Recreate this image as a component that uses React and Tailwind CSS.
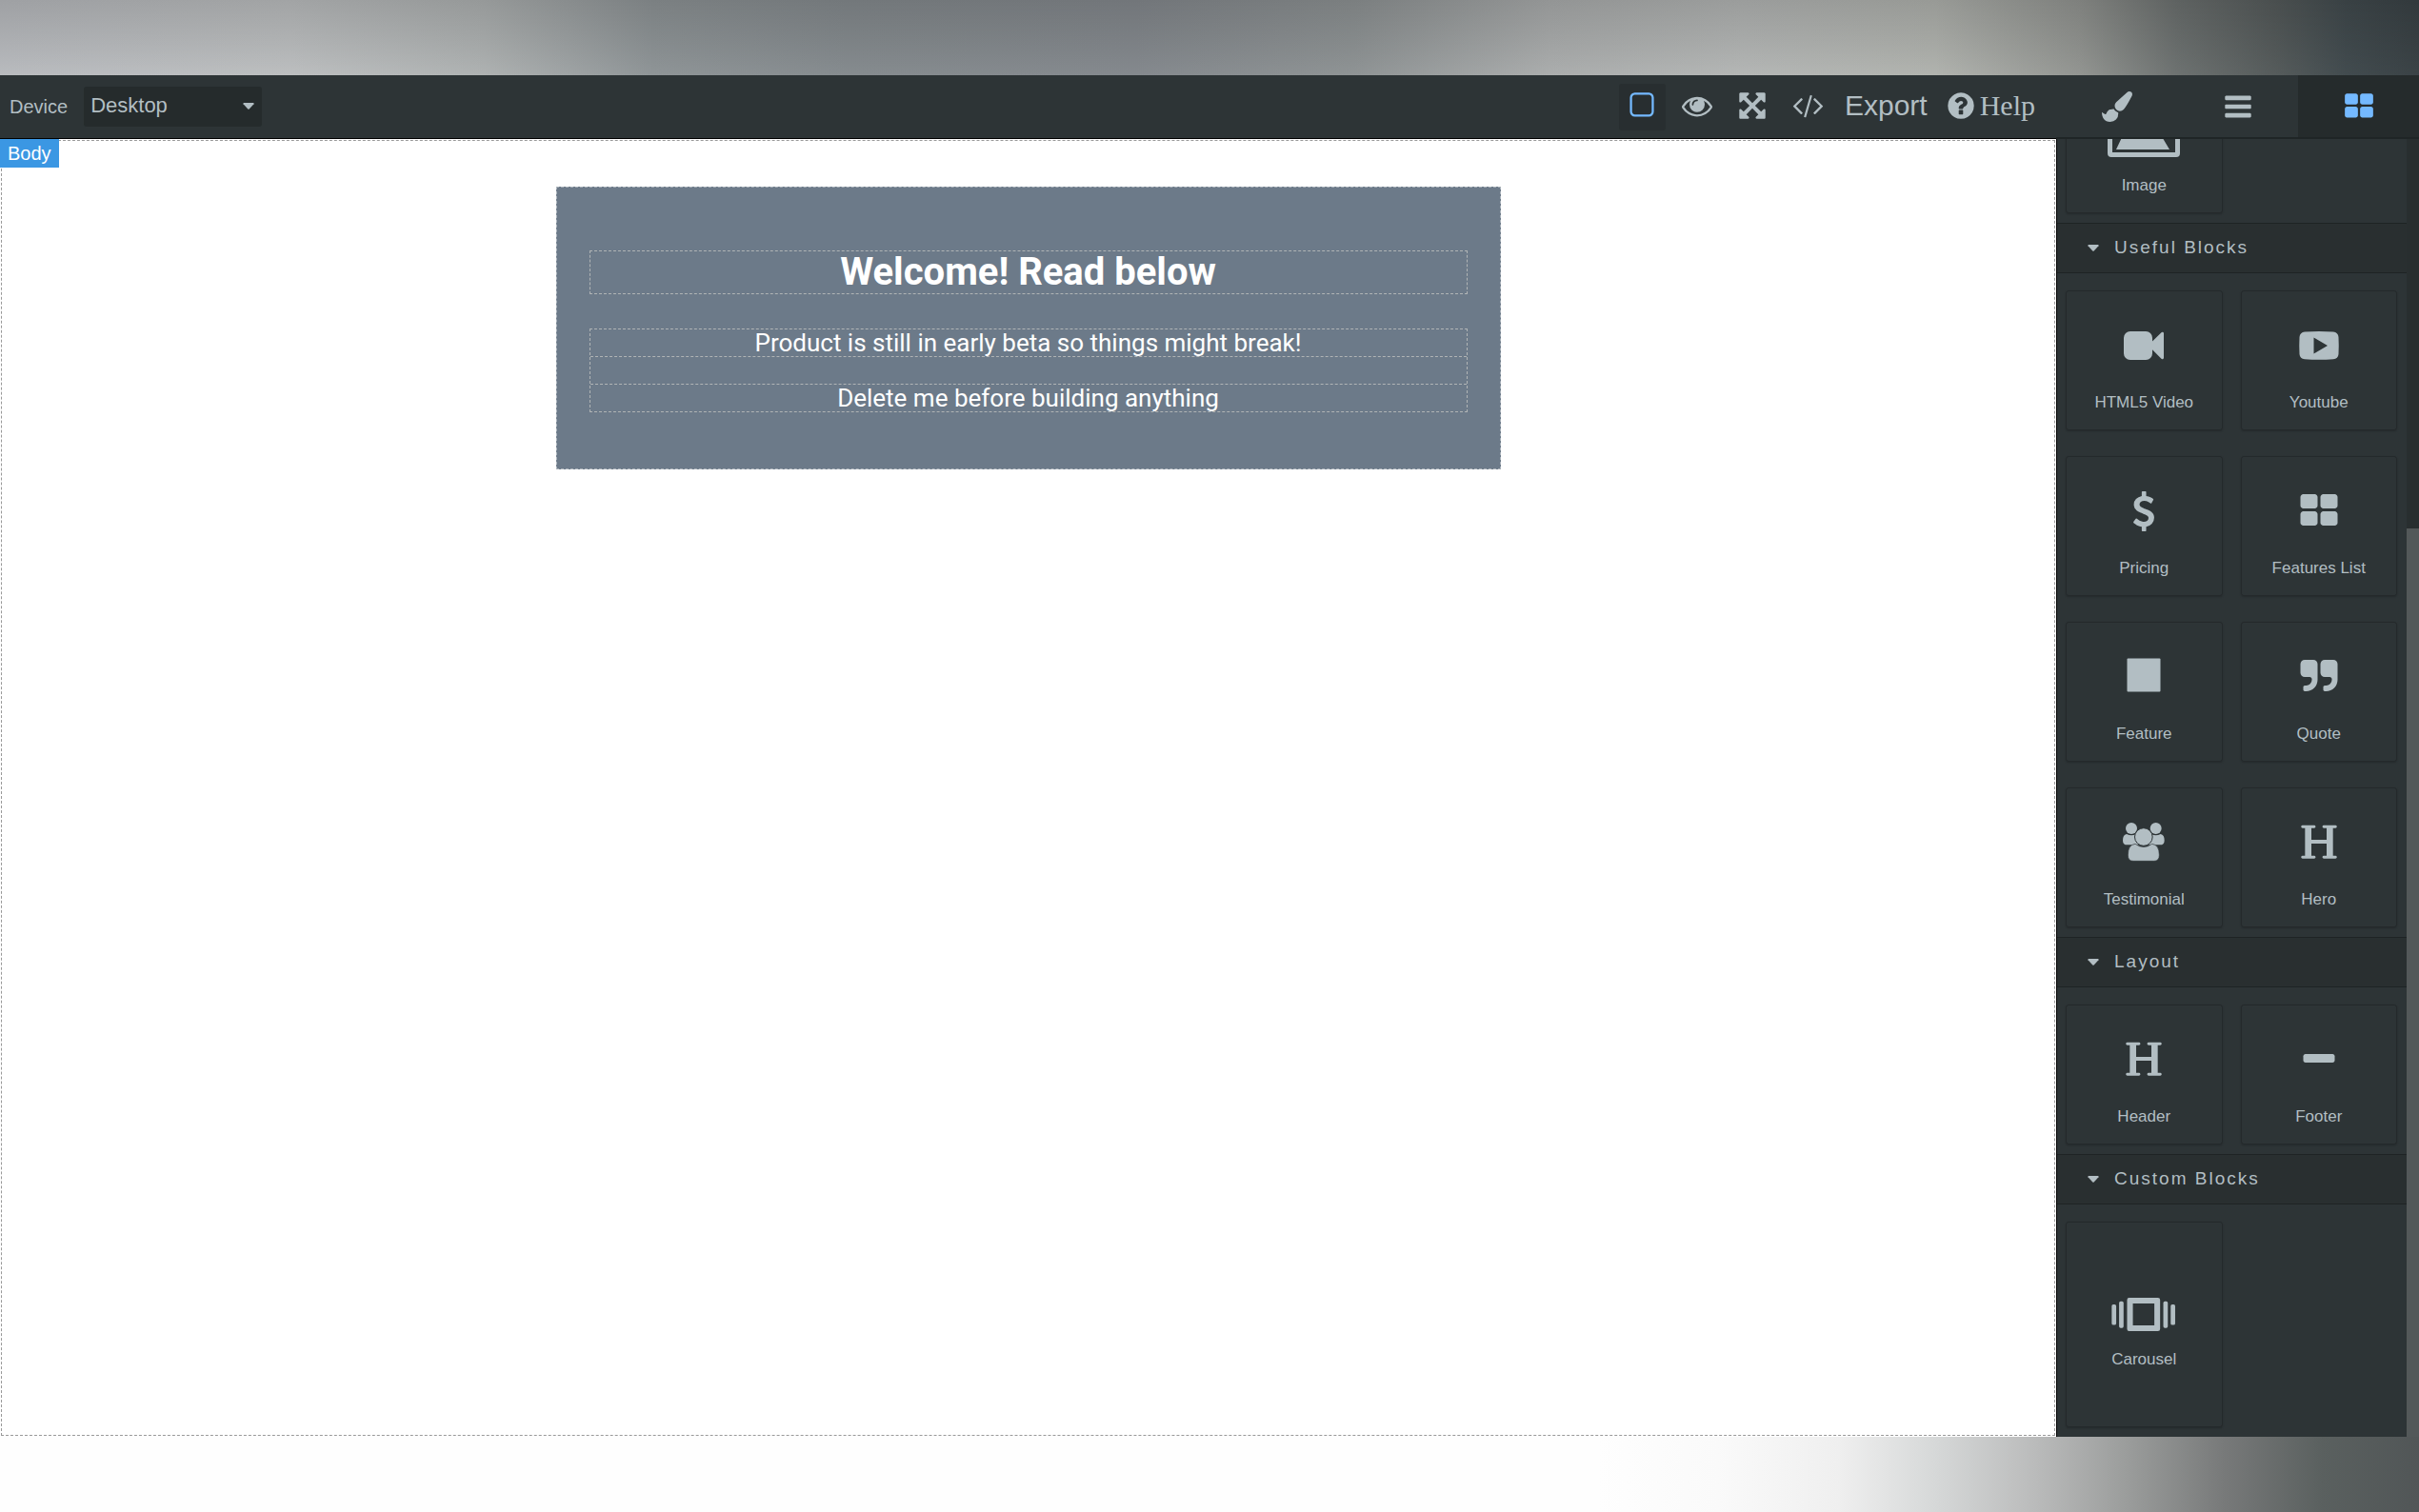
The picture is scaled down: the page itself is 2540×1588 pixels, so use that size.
import React, { useState } from 'react';

const iconPaths = {
  outline: 'M1312 256h-832q-66 0-113 47t-47 113v832q0 66 47 113t113 47h832q66 0 113-47t47-113v-832q0-66-47-113t-113-47zm288 160v832q0 119-84.5 203.5t-203.5 84.5h-832q-119 0-203.5-84.5t-84.5-203.5v-832q0-119 84.5-203.5t203.5-84.5h832q119 0 203.5 84.5t84.5 203.5z',
  eye: 'M1664 960q-152-236-381-353 61 104 61 225 0 185-131.5 316.5t-316.5 131.5-316.5-131.5-131.5-316.5q0-121 61-225-229 117-381 353 133 205 333.5 326.5t434.5 121.5 434.5-121.5 333.5-326.5zm-720-384q0-20-14-34t-34-14q-125 0-214.5 89.5t-89.5 214.5q0 20 14 34t34 14 34-14 14-34q0-86 61-147t147-61q20 0 34-14t14-34zm848 384q0 34-20 69-140 230-376.5 368.5t-499.5 138.5-499.5-139-376.5-368q-20-35-20-69t20-69q140-229 376.5-368t499.5-139 499.5 139 376.5 368q20 35 20 69z',
  expand: 'M1411 541l-355 355 355 355 144-144q29-31 70-14 39 17 39 59v448q0 26-19 45t-45 19h-448q-42 0-59-40-17-39 14-69l144-144-355-355-355 355 144 144q31 30 14 69-17 40-59 40h-448q-26 0-45-19t-19-45v-448q0-42 40-59 39-17 69 14l144 144 355-355-355-355-144 144q-19 19-45 19-12 0-24-5-40-17-40-59v-448q0-26 19-45t45-19h448q42 0 59 40 17 39-14 69l-144 144 355 355 355-355-144-144q-31-30-14-69 17-40 59-40h448q26 0 45 19t19 45v448q0 42-39 59-13 5-25 5-26 0-45-19z',
  code: 'M681 1399l-50 50q-10 10-23 10t-23-10l-466-466q-10-10-10-23t10-23l466-466q10-10 23-10t23 10l50 50q10 10 10 23t-10 23l-393 393 393 393q10 10 10 23t-10 23zm591-1067l-373 1291q-4 13-15.5 19.5t-23.5 2.5l-62-17q-13-4-19.5-15.5t-2.5-24.5l373-1291q4-13 15.5-19.5t23.5-2.5l62 17q13 4 19.5 15.5t2.5 24.5zm657 651l-466 466q-10 10-23 10t-23-10l-50-50q-10-10-10-23t10-23l393-393-393-393q-10-10-10-23t10-23l50-50q10-10 23-10t23 10l466 466q10 10 10 23t-10 23z',
  help: 'M1024 1376v-192q0-14-9-23t-23-9h-192q-14 0-23 9t-9 23v192q0 14 9 23t23 9h192q14 0 23-9t9-23zm256-672q0-88-55.5-163t-138.5-116-170-41q-243 0-371 213-15 24 8 42l132 100q7 6 19 6 16 0 25-12 53-68 86-92 34-24 86-24 48 0 85.5 26t37.5 59q0 38-20 61t-68 45q-63 28-115.5 86.5t-52.5 125.5v36q0 14 9 23t23 9h192q14 0 23-9t9-23q0-19 21.5-49.5t54.5-49.5q32-18 49-28.5t46-35 44.5-48 28-60.5 12.5-81zm384 192q0 209-103 385.5t-279.5 279.5-385.5 103-385.5-103-279.5-279.5-103-385.5 103-385.5 279.5-279.5 385.5-103 385.5 103 279.5 279.5 103 385.5z',
  brush: 'M1615 0q70 0 122.5 46.5t52.5 116.5q0 63-45 151-332 629-465 752-97 91-218 91-126 0-216.5-92.5t-90.5-219.5q0-128 92-212l638-579q59-54 130-54zm-909 1034q39 76 106.5 130t150.5 76l1 71q4 213-129.5 347t-348.5 134q-123 0-218-46.5t-152.5-127.5-86.5-183-29-220q7 5 41 30t62 44.5 59 36.5 46 17q41 0 55-37 25-66 57.5-112.5t69.5-76 88-47.5 103-25.5 125-10.5z',
  bars: 'M1664 1344v128q0 26-19 45t-45 19h-1408q-26 0-45-19t-19-45v-128q0-26 19-45t45-19h1408q26 0 45 19t19 45zm0-512v128q0 26-19 45t-45 19h-1408q-26 0-45-19t-19-45v-128q0-26 19-45t45-19h1408q26 0 45 19t19 45zm0-512v128q0 26-19 45t-45 19h-1408q-26 0-45-19t-19-45v-128q0-26 19-45t45-19h1408q26 0 45 19t19 45z',
  grid: 'M832 1024v384q0 52-38 90t-90 38h-512q-52 0-90-38t-38-90v-384q0-52 38-90t90-38h512q52 0 90 38t38 90zm0-768v384q0 52-38 90t-90 38h-512q-52 0-90-38t-38-90v-384q0-52 38-90t90-38h512q52 0 90 38t38 90zm896 768v384q0 52-38 90t-90 38h-512q-52 0-90-38t-38-90v-384q0-52 38-90t90-38h512q52 0 90 38t38 90zm0-768v384q0 52-38 90t-90 38h-512q-52 0-90-38t-38-90v-384q0-52 38-90t90-38h512q52 0 90 38t38 90z',
  video: 'M1792 352v1088q0 42-39 59-13 5-25 5-27 0-45-19l-403-403v166q0 119-84.5 203.5t-203.5 84.5h-704q-119 0-203.5-84.5t-84.5-203.5v-704q0-119 84.5-203.5t203.5-84.5h704q119 0 203.5 84.5t84.5 203.5v165l403-402q18-19 45-19 12 0 25 5 39 17 39 59z',
  dollar: 'M1362 1185q0 153-99.5 263.5t-258.5 136.5v175q0 14-9 23t-23 9h-135q-13 0-22.5-9.5t-9.5-22.5v-175q-66-9-127.5-31t-101.5-44.5-74-48-46.5-37.5-17.5-18q-17-21-2-41l103-135q7-10 23-12 15-2 24 9l2 2q113 99 243 125 37 8 74 8 81 0 142.5-43t61.5-122q0-28-15-53t-33.5-42-58.5-37.5-66-32-80-32.5q-39-16-61.5-25t-61.5-26.5-62.5-31-56.5-35.5-53.5-42.5-43.5-49-35.5-58-21-66.5-8.5-78q0-138 98-242t255-134v-180q0-13 9.5-22.5t22.5-9.5h135q14 0 23 9t9 23v176q57 6 110.5 23t87 33.5 63.5 37.5 39 29 15 14q17 18 5 38l-81 146q-8 15-23 16-14 3-27-7-3-3-14.5-12t-39-26.5-58.5-32-74.5-26-85.5-11.5q-95 0-155 43t-60 111q0 26 8.5 48t29.5 41.5 39.5 33 56 31 60.5 27 70 27.5q53 20 81 31.5t76 35 75.5 42.5 62 50 53 63.5 31.5 76.5 13 94z',
  quote: 'M832 320v704q0 104-40.5 198.5t-109.5 163.5-163.5 109.5-198.5 40.5h-64q-26 0-45-19t-19-45v-128q0-26 19-45t45-19h64q106 0 181-75t75-181v-32q0-40-28-68t-68-28h-224q-80 0-136-56t-56-136v-384q0-80 56-136t136-56h384q80 0 136 56t56 136zm896 0v704q0 104-40.5 198.5t-109.5 163.5-163.5 109.5-198.5 40.5h-64q-26 0-45-19t-19-45v-128q0-26 19-45t45-19h64q106 0 181-75t75-181v-32q0-40-28-68t-68-28h-224q-80 0-136-56t-56-136v-384q0-80 56-136t136-56h384q80 0 136 56t56 136z',
  minus: 'M1600 736v192q0 40-28 68t-68 28h-1216q-40 0-68-28t-28-68v-192q0-40 28-68t68-28h1216q40 0 68 28t28 68z'
};

const Icon = ({ name, className, viewBox = '0 0 1792 1792' }) => (
  <svg viewBox={viewBox} fill="currentColor" className={className} aria-hidden="true">
    <path d={iconPaths[name]} />
  </svg>
);

const YoutubeIcon = () => (
  <svg viewBox="0 0 42 42" className="h-[42px] w-[42px]" fill="currentColor" aria-hidden="true">
    <path fillRule="evenodd" d="M6 6.500Q21 5.600 36 6.500Q41 7 41.500 12Q42 21 41.500 30Q41 35 36 35.300Q21 36.400 6 35.300Q1 35 .5 30Q0 21 .5 12Q1 7 6 6.500ZM15.500 12.500V29.500L30 21Z" />
  </svg>
);

const SquareIcon = () => (
  <svg viewBox="0 0 42 42" className="h-[42px] w-[42px]" fill="currentColor" aria-hidden="true">
    <rect x="3.500" y="1.500" width="35" height="35" rx="1" />
  </svg>
);

const HeadingIcon = () => (
  <svg viewBox="0 0 126 126" className="h-[42px] w-[42px]" fill="currentColor" aria-hidden="true">
    <rect x="7" y="8" width="45" height="9" rx="4" />
    <rect x="74" y="8" width="45" height="9" rx="4" />
    <rect x="7" y="104" width="45" height="9" rx="4" />
    <rect x="74" y="104" width="45" height="9" rx="4" />
    <rect x="19" y="10" width="20" height="101" />
    <rect x="87" y="10" width="20" height="101" />
    <rect x="36" y="54" width="54" height="12" />
  </svg>
);

const UsersIcon = () => (
  <svg viewBox="0 0 132 126" className="h-[42px] w-[44px]" fill="currentColor" aria-hidden="true">
    <circle cx="27" cy="18" r="18" />
    <circle cx="104" cy="18" r="18" />
    <path d="M12 36Q27 44 42 36L52 70H14Q0 70 0 56Q0 38 12 36Z" />
    <path d="M119 36Q104 44 89 36L79 70H117Q131 70 131 56Q131 38 119 36Z" />
    <path d="M39 67Q66 86 92 67Q115 70 115 102Q115 121 98 121H33Q16 121 16 102Q16 70 39 67Z" stroke="#2d3436" strokeWidth="2" />
    <circle cx="65.500" cy="45" r="28" stroke="#2d3436" strokeWidth="3" />
  </svg>
);

const CarouselIcon = () => (
  <svg viewBox="0 0 200 104" className="h-[35px] w-[68px]" fill="currentColor" aria-hidden="true">
    <rect x="0" y="21" width="14" height="64" rx="5" />
    <rect x="23" y="11" width="14" height="83" rx="5" />
    <path fillRule="evenodd" d="M54 0H144Q151 0 151 7V97Q151 104 144 104H54Q48 104 48 97V7Q48 0 54 0ZM66 18V86H133V18Z" />
    <rect x="161" y="11" width="14" height="83" rx="5" />
    <rect x="184" y="21" width="14" height="64" rx="5" />
  </svg>
);

const ImageIcon = () => (
  <svg viewBox="0 0 76 60" className="h-[60px] w-[76px]" fill="currentColor" aria-hidden="true">
    <path fillRule="evenodd" d="M4 0H72Q76 0 76 4V56Q76 60 72 60H4Q0 60 0 56V4Q0 0 4 0ZM5 5V55H71V5Z" />
    <path d="M9 52L27 14L38 32L46 20L65 52Z" />
  </svg>
);

const blockIcon = 'h-[42px] w-[42px]';

const sections = [
  {
    title: 'Useful Blocks',
    blocks: [
      { label: 'HTML5 Video', icon: <Icon name="video" className={blockIcon} /> },
      { label: 'Youtube', icon: <YoutubeIcon /> },
      { label: 'Pricing', icon: <Icon name="dollar" className={blockIcon} /> },
      { label: 'Features List', icon: <Icon name="grid" className={blockIcon} /> },
      { label: 'Feature', icon: <SquareIcon /> },
      { label: 'Quote', icon: <Icon name="quote" className={blockIcon} /> },
      { label: 'Testimonial', icon: <UsersIcon /> },
      { label: 'Hero', icon: <HeadingIcon /> }
    ]
  },
  {
    title: 'Layout',
    blocks: [
      { label: 'Header', icon: <HeadingIcon /> },
      { label: 'Footer', icon: <Icon name="minus" className={blockIcon} /> }
    ]
  },
  {
    title: 'Custom Blocks',
    blocks: [{ label: 'Carousel', icon: <CarouselIcon />, tall: true, wide: true }]
  }
];

const Block = ({ label, icon, tall, wide }) => (
  <button
    type="button"
    className={`flex flex-col items-center rounded-[3px] border border-black/20 shadow-[0_1px_2px_rgba(0,0,0,0.2)] ${
      tall ? 'h-[216px] justify-center pt-[18px]' : 'h-[147px] justify-end pb-[18px]'
    }`}
  >
    {icon}
    <span className={`text-[17px] leading-5 ${wide ? 'mt-5' : 'mt-[29px]'}`}>{label}</span>
  </button>
);

const Caret = ({ className }) => (
  <svg viewBox="0 0 12 7" className={`h-[7px] w-3 ${className}`} fill="currentColor" aria-hidden="true">
    <path d="M1 0H11Q12 .5 11.500 1.200L6.700 6.500Q6 7 5.300 6.500L.5 1.200Q0 .5 1 0Z" />
  </svg>
);

const toolButton = 'flex h-[49px] w-[49px] items-center justify-center rounded-[3px] pb-[3px]';

const Toolbar = () => {
  const [device, setDevice] = useState('Desktop');
  const [outlines, setOutlines] = useState(true);

  return (
    <div className="flex h-[67px] min-w-0 flex-1 items-center justify-between border-b border-black bg-[#2d3436]">
      <div className="flex items-center">
        <label htmlFor="device" className="pl-[10px] text-[20px] leading-6">Device</label>
        <div className="relative ml-[17px]">
          <select
            id="device"
            value={device}
            onChange={(e) => setDevice(e.target.value)}
            className="block h-[42px] w-[187px] appearance-none rounded-[3px] bg-[#252b2c] px-[7px] pb-[3px] text-[22px]"
          >
            <option>Desktop</option>
            <option>Tablet</option>
            <option>Mobile</option>
          </select>
          <Caret className="pointer-events-none absolute top-[17px] right-2" />
        </div>
      </div>

      <div className="flex items-center pr-[22px]">
        <div className="flex items-center gap-[9px]">
          <button
            type="button"
            aria-label="View components"
            onClick={() => setOutlines(!outlines)}
            className={`${toolButton} ${outlines ? 'bg-[#282e30] text-[#74b9ff]' : ''}`}
          >
            <Icon name="outline" className="h-8 w-8" />
          </button>
          <button type="button" aria-label="Preview" className={toolButton}>
            <Icon name="eye" className="h-8 w-8" />
          </button>
          <button type="button" aria-label="Fullscreen" className={toolButton}>
            <Icon name="expand" className="h-8 w-8" />
          </button>
          <button type="button" aria-label="View code" className={toolButton}>
            <Icon name="code" viewBox="0 0 2048 1792" className="h-[31px] w-[35px]" />
          </button>
        </div>
        <button type="button" className="ml-[14px] pb-[3px] text-[30px] leading-9">Export</button>
        <button type="button" className="ml-[19px] flex items-center gap-1 pb-[3px] font-['Liberation_Serif',serif] text-[30px] leading-9">
          <Icon name="help" className="h-8 w-8" />
          Help
        </button>
      </div>
    </div>
  );
};

const PanelTabs = () => {
  const tabs = [
    { name: 'brush', label: 'Style manager' },
    { name: 'bars', label: 'Layers' },
    { name: 'grid', label: 'Blocks' }
  ];
  const [active, setActive] = useState('grid');

  return (
    <div className="flex h-[67px] w-[15%] shrink-0 border-b-2 border-[#1f2526] bg-[#2d3436]">
      {tabs.map(({ name, label }) => (
        <button
          key={name}
          type="button"
          aria-label={label}
          onClick={() => setActive(name)}
          className={`flex flex-1 items-center justify-center ${active === name ? 'bg-[#252b2c] text-[#74b9ff]' : ''}`}
        >
          <Icon name={name} className="h-8 w-8" />
        </button>
      ))}
    </div>
  );
};

const Canvas = () => (
  <main className="relative min-w-0 flex-1 bg-white p-px font-[Roboto,sans-serif] text-white">
    <div className="h-full border border-dashed border-[#999] pt-12">
      <section className="mx-auto w-[992px] border border-dashed border-[#aab2ba] bg-[#6c7a89] px-[34px] pt-[66px] pb-[59px] text-center">
        <h1 className="border border-dashed border-[#b0b4b5] text-[40px] leading-[44px] font-bold">
          Welcome! Read below
        </h1>
        <div className="mt-9 border border-dashed border-[#b0b4b5] text-[26px] leading-7">
          <p className="border-b border-dashed border-[#b0b4b5]">Product is still in early beta so things might break!</p>
          <p className="mt-7 border-t border-dashed border-[#b0b4b5]">Delete me before building anything</p>
        </div>
      </section>
    </div>
    {/* Selected component badge */}
    <div className="absolute top-0 left-0 bg-[#3b97e3] px-2 font-['Liberation_Sans',sans-serif] text-[20px] leading-[30px]">
      Body
    </div>
  </main>
);

const BlocksPanel = () => (
  <aside className="flex w-[15%] shrink-0 border-l border-black bg-[#2d3436]">
    <div className="flex min-h-0 flex-1 flex-col justify-end overflow-hidden">
      <div className="grid shrink-0 grid-cols-2 gap-x-[19px] pr-[10px] pb-[10px] pl-[9px]">
        <Block label="Image" icon={<ImageIcon />} wide />
      </div>
      {sections.map(({ title, blocks }) => (
        <div key={title} className="shrink-0">
          <button
            type="button"
            className="flex h-[53px] w-full items-center border-y border-black/25 bg-[#292f30] pl-8 text-[19px] tracking-[2px]"
          >
            <Caret className="mr-4" />
            {title}
          </button>
          <div className="grid grid-cols-2 gap-x-[19px] gap-y-[27px] pt-[18px] pr-[10px] pb-[10px] pl-[9px]">
            {blocks.map((block) => (
              <Block key={block.label} {...block} />
            ))}
          </div>
        </div>
      ))}
    </div>
    {/* Scrollbar */}
    <div className="flex w-[13px] flex-col justify-end bg-[#282e2f]">
      <div className="h-[70%] bg-[#535859]" />
    </div>
  </aside>
);

const App = () => (
  <div className="flex h-screen flex-col overflow-hidden bg-white font-['Liberation_Sans',sans-serif] text-[#b2bec3]">
    <div className="h-[79px] shrink-0 bg-[linear-gradient(to_bottom,#000000,#242424),linear-gradient(to_right,#9fa1a4_0%,#a2a4a5_12%,#969999_20%,#7b8082_27%,#73787b_35%,#72767a_47%,#7b7f80_56%,#939595_64%,#9b9d9c_72%,#989a96_80%,#7e807d_86%,#5e6261_90%,#4a4f4f_94%,#394144_97%,#32393c_100%)] bg-blend-color-dodge" />
    <div className="flex min-h-0 flex-1 flex-col">
      <header className="flex">
        <Toolbar />
        <PanelTabs />
      </header>
      <div className="flex min-h-0 flex-1">
        <Canvas />
        <BlocksPanel />
      </div>
    </div>
    <div className="h-[79px] shrink-0 bg-[linear-gradient(to_right,#fefefe_0%,#fefefe_66%,#fafafa_71%,#efefef_76%,#d6d8d8_80%,#bbbcbc_84%,#9a9c9b_88%,#777979_92%,#5a605f_96%,#515657_100%)]" />
  </div>
);

export default App;
